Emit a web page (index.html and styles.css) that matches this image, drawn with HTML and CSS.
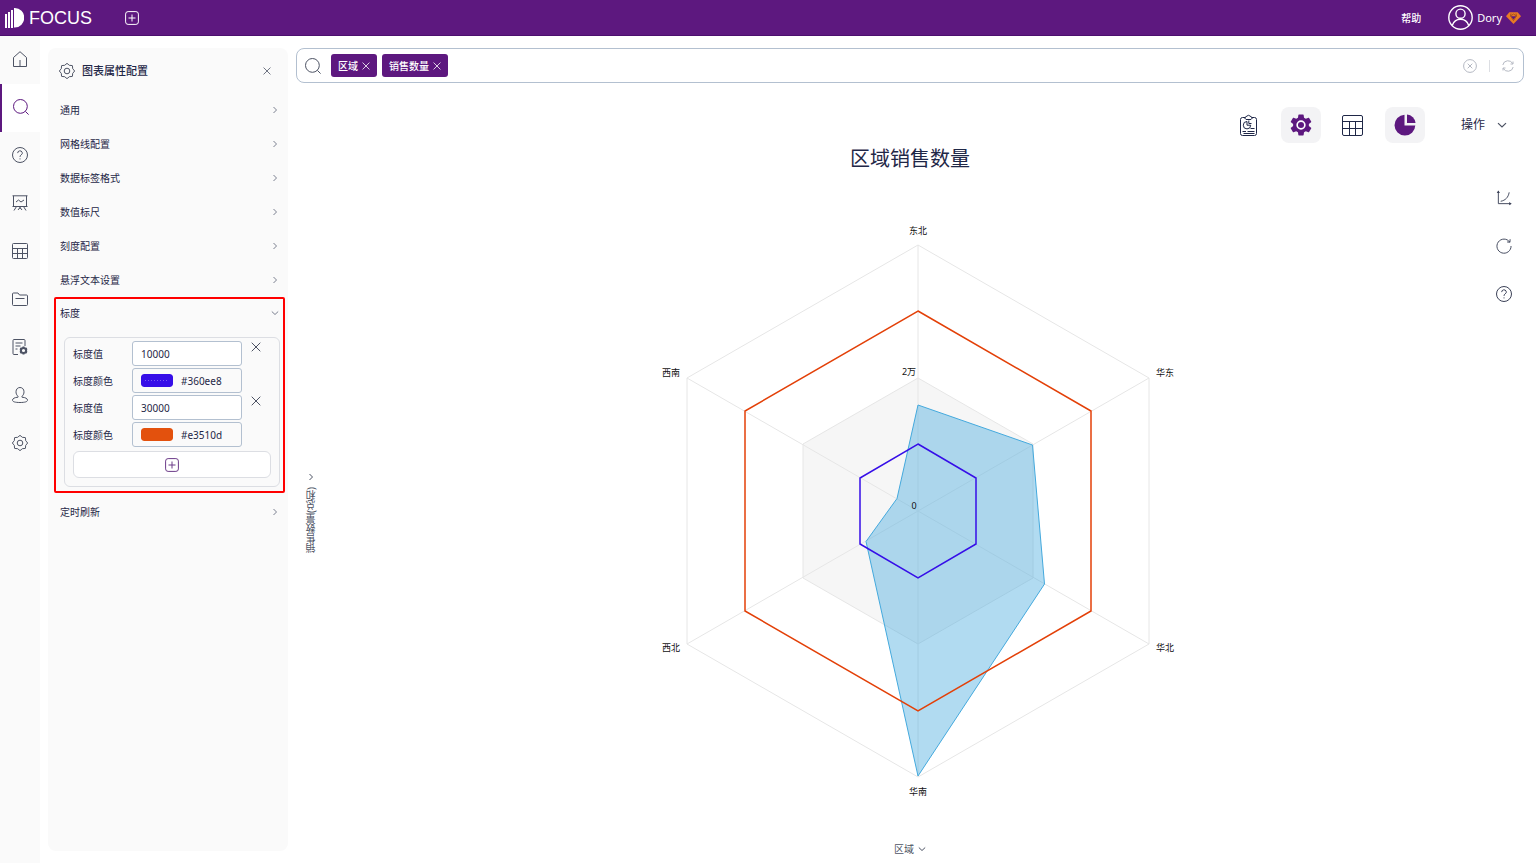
FILE: index.html
```html
<!DOCTYPE html>
<html lang="zh-CN">
<head>
<meta charset="utf-8">
<meta name="viewport" content="width=device-width, initial-scale=1">
<title>FOCUS</title>
<link rel="stylesheet" href="styles.css">
</head>
<body>
<svg class="defs" aria-hidden="true">
  <symbol id="i-gear" viewBox="-8 -8 16 16"><path d="M6.790-1.070Q8.400 0 6.790 1.070Q5.170 2.140 5.560 4.040Q5.940 5.940 4.040 5.560Q2.140 5.170 1.070 6.790Q0 8.400-1.070 6.790Q-2.140 5.170-4.040 5.560Q-5.940 5.940-5.560 4.040Q-5.170 2.140-6.790 1.070Q-8.400 0-6.790-1.070Q-5.170-2.140-5.560-4.040Q-5.940-5.940-4.040-5.560Q-2.140-5.170-1.070-6.790Q0-8.400 1.070-6.790Q2.140-5.170 4.040-5.560Q5.940-5.940 5.560-4.040Q5.170-2.140 6.790-1.070Z"/><circle r="2.800"/></symbol>
  <symbol id="i-search" viewBox="0 0 16 16"><circle cx="7.4" cy="7.4" r="6.9"/><path d="M12.4 12.4l3.2 3.2"/></symbol>
  <symbol id="i-help" viewBox="0 0 16 16"><circle cx="8" cy="8" r="7.5"/><path d="M5.7 6.1a2.3 2.2 0 1 1 3.5 1.8C8.400 8.400 8 8.800 8 9.900M8 11.400v1"/></symbol>
  <symbol id="i-x" viewBox="0 0 10 10"><path d="M.7.7l8.600 8.600M9.300.7L.7 9.300"/></symbol>
  <symbol id="i-right" viewBox="0 0 8 8"><path d="M2.500 1l3 3-3 3"/></symbol>
  <symbol id="i-down" viewBox="0 0 8 8"><path d="M.8 2.500l3.200 3 3.200-3"/></symbol>
  <symbol id="i-plus" viewBox="0 0 14 14"><rect x=".6" y=".6" width="12.800" height="12.800" rx="2.500"/><path d="M7 3.500v7M3.500 7h7"/></symbol>
</svg>

<header class="topbar">
  <a class="brand" href="#">
    <svg class="logo" width="19" height="20" viewBox="0 0 19 20" aria-hidden="true"><path d="M0 6h2v14H0zM3 4h2v16H3zM6 2h2v18H6zM9 0h.8a9.200 9.500 0 0 1 0 19.500H9z"/></svg>
    <span>FOCUS</span>
  </a>
  <button class="icon-btn new-tab" aria-label="新建"><svg width="14" height="14"><use href="#i-plus"/></svg></button>
  <a class="help-link" href="#">帮助</a>
  <button class="user">
    <svg width="25" height="25" viewBox="0 0 25 25"><circle cx="12.500" cy="12.500" r="11.700"/><circle cx="12.500" cy="8.700" r="4.600"/><path d="M4.200 20.500c1.500-4.500 4.500-6.300 8.300-6.300s6.800 1.800 8.300 6.300"/></svg>
    <span>Dory</span>
    <svg class="gem" width="15" height="12" viewBox="0 0 15 12"><path class="gem-body" d="M3.300.3h8.400L15 4.200 7.500 12 0 4.200z"/><path d="M4.600 4.200h5.800L7.500 7.600z" class="gem-core"/><path d="M4.500 4L7.500 8.500 10.500 4M5 1.500L4.500 4 7.500 2l3 2L10 1.500" class="gem-line"/></svg>
  </button>
</header>

<div class="shell">
  <nav class="rail" aria-label="主导航">
    <a href="#" aria-label="首页"><svg width="16" height="16" viewBox="0 0 16 16"><path d="M1.500 6.500L8 .7l6.500 5.800v9h-13zM8 9v6.500"/></svg></a>
    <a href="#" class="active" aria-label="搜索"><svg width="16" height="16"><use href="#i-search"/></svg></a>
    <a href="#" aria-label="问答"><svg width="16" height="16"><use href="#i-help"/></svg></a>
    <a href="#" aria-label="看板"><svg width="16" height="16" viewBox="0 0 16 16"><path d="M.5.800h15M1.500.800v10.700h13V.8M.5 11.500h15M4.500 11.500L2 15.500M11.500 11.500l2.500 4M8 11.500v2.500M6 15l2-2.500 2 2.500M4 7l2.500-2 2.500 2 3-2"/></svg></a>
    <a href="#" aria-label="数据表"><svg width="16" height="16" viewBox="0 0 16 16"><rect x=".5" y=".5" width="15" height="15" rx="1"/><path d="M.5 5.500h15M.5 10.500h15M5.500 5.500v10M10.500 5.500v10"/></svg></a>
    <a href="#" aria-label="项目"><svg width="16" height="16" viewBox="0 0 16 16"><path d="M.5 13.500v-10.500a1 1 0 0 1 1-1h4.500l1.500 2h7a1 1 0 0 1 1 1v8.500a1 1 0 0 1-1 1h-13a1 1 0 0 1-1-1zM3.500 7.500h9"/></svg></a>
    <a href="#" aria-label="任务"><svg width="16" height="16" viewBox="0 0 16 16"><path d="M6 15.500H2a1 1 0 0 1-1-1V1.500a1 1 0 0 1 1-1h10a1 1 0 0 1 1 1V7M3.500 4h7M3.500 7h5M3.500 10h2"/><circle cx="11.500" cy="11.500" r="2.600" class="thick"/><path class="thick" d="M11.500 7.500v1M11.500 14.500v1M8 9.500l1 .5M14 13l1 .5M8 13.500l1-.5M14 10l1-.5"/></svg></a>
    <a href="#" aria-label="用户"><svg width="16" height="16" viewBox="0 0 16 16"><path d="M6 9.200C4.500 8 4 6.500 4 4.800 4 2.200 5.700.5 8 .5s4 1.700 4 4.300c0 1.700-.5 3.200-2 4.400v1c3.500.3 5.500 1.300 5.500 3 0 1.500-2.500 2.300-7.500 2.300S.5 14.700.5 13.200c0-1.700 2-2.700 5.500-3z"/></svg></a>
    <a href="#" aria-label="设置"><svg width="16" height="16"><use href="#i-gear"/></svg></a>
  </nav>

  <aside class="panel">
    <div class="panel-head">
      <svg width="16" height="16"><use href="#i-gear"/></svg>
      <h2>图表属性配置</h2>
      <button class="icon-btn" aria-label="关闭"><svg width="8" height="8"><use href="#i-x"/></svg></button>
    </div>
    <button class="row">通用<svg width="8" height="8"><use href="#i-right"/></svg></button>
    <button class="row">网格线配置<svg width="8" height="8"><use href="#i-right"/></svg></button>
    <button class="row">数据标签格式<svg width="8" height="8"><use href="#i-right"/></svg></button>
    <button class="row">数值标尺<svg width="8" height="8"><use href="#i-right"/></svg></button>
    <button class="row">刻度配置<svg width="8" height="8"><use href="#i-right"/></svg></button>
    <button class="row">悬浮文本设置<svg width="8" height="8"><use href="#i-right"/></svg></button>
    <section class="marked">
      <button class="row" aria-expanded="true">标度<svg width="8" height="8"><use href="#i-down"/></svg></button>
      <div class="scales">
        <div class="field">
          <label for="v1">标度值</label>
          <input id="v1" class="box" type="text" value="10000">
          <button class="icon-btn remove" aria-label="删除"><svg width="10" height="10"><use href="#i-x"/></svg></button>
        </div>
        <div class="field">
          <label for="c1">标度颜色</label>
          <div class="box color"><span class="swatch dotted"><input id="c1" type="color" value="#360ee8"></span><span>#360ee8</span></div>
        </div>
        <div class="field">
          <label for="v2">标度值</label>
          <input id="v2" class="box" type="text" value="30000">
          <button class="icon-btn remove" aria-label="删除"><svg width="10" height="10"><use href="#i-x"/></svg></button>
        </div>
        <div class="field">
          <label for="c2">标度颜色</label>
          <div class="box color"><span class="swatch"><input id="c2" type="color" value="#e3510d"></span><span>#e3510d</span></div>
        </div>
        <button class="add" aria-label="添加标度"><svg width="14" height="14"><use href="#i-plus"/></svg></button>
      </div>
    </section>
    <button class="row">定时刷新<svg width="8" height="8"><use href="#i-right"/></svg></button>
  </aside>

  <main class="main">
    <div class="searchbar">
      <svg width="16" height="16"><use href="#i-search"/></svg>
      <span class="tag">区域<button aria-label="移除区域"><svg width="8" height="8"><use href="#i-x"/></svg></button></span>
      <span class="tag">销售数量<button aria-label="移除销售数量"><svg width="8" height="8"><use href="#i-x"/></svg></button></span>
      <input class="query" type="text" aria-label="搜索">
      <button class="icon-btn" aria-label="清空"><svg width="14" height="14" viewBox="0 0 14 14"><circle cx="7" cy="7" r="6.400"/><path d="M4.700 4.700l4.600 4.600M9.300 4.700L4.700 9.300"/></svg></button>
      <span class="divider"></span>
      <button class="icon-btn" aria-label="刷新"><svg width="12" height="12" viewBox="0 0 12 12"><path d="M.8 5A5.300 5.300 0 0 1 10.800 3.800M11.200 7A5.300 5.300 0 0 1 1.200 8.200M11 1.500v2.500H8.500M1 10.500V8h2.500"/></svg></button>
    </div>

    <div class="toolbar">
      <button class="tool" aria-label="报告"><svg width="18" height="22" viewBox="0 0 18 22"><path d="M5.500 3.500h-3a2 2 0 0 0-2 2v14a2 2 0 0 0 2 2h12a2 2 0 0 0 2-2v-14a2 2 0 0 0-2-2h-3M4.500 3.800L7 2a2.200 2.200 0 0 1 3 0l2.500 1.800-1.500 1.700H6zM7 7.500a3.700 3.700 0 1 0 3.700 3.700H7zM8.800 6.500v3h2.700M10.500 14.500h4M2.500 17.500h3.500M7.500 17.500h7M3.500 19.500h11"/></svg></button>
      <button class="tool on" aria-label="图表配置"><svg class="solid" width="22" height="22" viewBox="2 2 20 20"><path d="M19.140 12.940c.04-.3.060-.61.060-.94s-.02-.64-.07-.94l2.030-1.580c.18-.14.230-.41.120-.61l-1.920-3.320c-.12-.22-.37-.29-.59-.22l-2.390.96c-.5-.38-1.030-.7-1.620-.94l-.36-2.540c-.04-.24-.24-.41-.48-.41h-3.840c-.24 0-.43.170-.47.410l-.36 2.540c-.59.240-1.130.570-1.620.940l-2.390-.96c-.22-.08-.47 0-.59.220L2.740 8.870c-.12.210-.08.470.12.610l2.030 1.580c-.05.3-.09.630-.09.940s.02.640.07.940l-2.030 1.580c-.18.140-.23.410-.12.610l1.920 3.320c.12.220.37.290.59.220l2.390-.96c.5.380 1.030.7 1.620.940l.36 2.540c.05.240.24.410.48.410h3.840c.24 0 .44-.17.470-.41l.36-2.540c.59-.24 1.130-.56 1.620-.94l2.390.96c.22.080.47 0 .59-.22l1.920-3.320c.12-.22.070-.47-.12-.61z"/><circle cx="12" cy="12" r="3.500" class="ring"/></svg></button>
      <button class="tool" aria-label="表格"><svg width="21" height="21" viewBox="0 0 21 21"><rect x=".5" y=".5" width="20" height="20" rx="1.500"/><path d="M.5 6.500h20M.5 13.500h20M7.500 6.500v14M13.500 6.500v14"/></svg></button>
      <button class="tool on" aria-label="图表"><svg class="solid" width="22" height="22" viewBox="0 0 22 22"><path d="M10.500.7v10.800h10.800A10.400 10.400 0 1 1 10.500.7z"/><path d="M13 .4A9.600 9.600 0 0 1 21.600 9H13z"/></svg></button>
      <button class="actions">操作<svg width="10" height="10" viewBox="0 0 8 8"><use href="#i-down"/></svg></button>
    </div>

    <h1 class="title">区域销售数量</h1>

    <div class="stage">
      <button class="y-axis"><svg width="8" height="8"><use href="#i-right"/></svg><span>销售数量(总和)</span></button>
      <svg class="radar" viewBox="0 0 1148 660" role="img" aria-label="区域销售数量雷达图">
        <g transform="translate(574 336)">
          <polygon class="band" points="0,-133 115,-67 115,67 0,133 -115,67 -115,-67"/>
          <polygon class="grid" points="0,-266 231,-133 231,133 0,266 -231,133 -231,-133"/>
          <path class="grid" d="M0-266V266M-231-133L231 133M-231 133L231-133"/>
          <polygon class="data" points="0,-106 114.500,-66 126.500,73 0,265 -52,30.500 -21,-12.500"/>
          <polygon class="mark high" points="0,-200 173,-100 173,100 0,200 -173,100 -173,-100"/>
          <polygon class="mark low" points="0,-67 58,-33 58,33 0,67 -58,33 -58,-33"/>
          <g class="labels">
            <text x="0" y="-277">东北</text>
            <text x="247" y="-135">华东</text>
            <text x="247" y="140">华北</text>
            <text x="0" y="284">华南</text>
            <text x="-247" y="140">西北</text>
            <text x="-247" y="-135">西南</text>
            <text x="-9" y="-136">2万</text>
            <text x="-4" y="-2">0</text>
          </g>
        </g>
      </svg>
      <div class="side-tools">
        <button class="icon-btn" aria-label="坐标轴"><svg width="16" height="16" viewBox="0 0 17 17"><path d="M2.500 1v13.500H16M5 12c5-1 8-4 9-9.500"/><path class="arrow" d="M.8 3.200L2.500.5l1.700 2.700zM14 12.800l2.700 1.700-2.700 1.700z"/></svg></button>
        <button class="icon-btn" aria-label="重新加载"><svg width="16" height="16" viewBox="0 0 17 17"><path d="M14.600 4.300A7.500 7.500 0 1 0 16 8.500M15 1.300l-.2 3.200-3-.3"/></svg></button>
        <button class="icon-btn" aria-label="帮助"><svg width="16" height="16"><use href="#i-help"/></svg></button>
      </div>
    </div>
    <button class="x-axis">区域<svg width="8" height="8"><use href="#i-down"/></svg></button>
  </main>
</div>
</body>
</html>
```
FILE: styles.css
```css
* { box-sizing: border-box; }

body {
  margin: 0;
  min-height: 100vh;
  display: flex;
  flex-direction: column;
  background: #fff;
  color: #1f2747;
  font: 10px/16px "Noto Sans", "Noto Sans CJK SC", sans-serif;
}

h1, h2 { margin: 0; font-weight: 400; }
a { color: inherit; text-decoration: none; }

button, input { font: inherit; color: inherit; }

button {
  padding: 0;
  border: 0;
  background: none;
  cursor: pointer;
}

svg {
  flex: none;
  display: block;
  fill: none;
  stroke: currentColor;
}

.defs { position: absolute; width: 0; height: 0; }
.icon-btn { display: flex; align-items: center; justify-content: center; }

/* Top bar */
.topbar {
  height: 36px;
  display: flex;
  align-items: center;
  padding: 0 15px 0 5px;
  background: #5d187f;
  border-bottom: 1px solid #4c0f6e;
  color: #fff;
}

.brand {
  display: flex;
  align-items: center;
  gap: 5px;
  font: 18px/20px "Liberation Sans", sans-serif;
}
.logo { fill: #fff; stroke: none; }
.new-tab { margin-left: 33px; }
.help-link { margin-left: auto; font-weight: 500; }

.user {
  display: flex;
  align-items: center;
  gap: 4px;
  margin-left: 27px;
  font-size: 11px;
}
.user svg { stroke-width: 1.4; }
.user .gem { stroke: none; }
.user .gem-body { fill: #e87b25; }
.user .gem-core { fill: #5d187f; }
.user .gem-line { stroke: #a8501f; stroke-width: 1; }

/* Layout */
.shell { flex: 1; display: flex; }

.rail {
  flex: none;
  width: 40px;
  display: flex;
  flex-direction: column;
  background: #fafafa;
}
.rail a {
  height: 48px;
  display: flex;
  align-items: center;
  justify-content: center;
  padding-bottom: 2px;
  color: #4d5364;
}
.rail .active {
  background: #fff;
  border-left: 2px solid #5d187f;
  color: #5d187f;
}
.thick { stroke-width: 2; }

/* Settings panel */
.panel {
  flex: none;
  width: 240px;
  margin: 12px 8px;
  border-radius: 8px;
  background: #fafafa;
}

.panel-head {
  height: 45px;
  display: flex;
  align-items: center;
  gap: 7px;
  padding: 0 17px 0 11px;
  color: #4d5364;
}
.panel-head h2 {
  flex: 1;
  color: #1f2747;
  font-size: 11px;
  font-weight: 500;
}

.row {
  width: 100%;
  height: 34px;
  display: flex;
  align-items: center;
  justify-content: space-between;
  padding: 0 9px 0 12px;
}
.row svg { color: #7b8090; }

.marked {
  margin: 0 3px 2px 6px;
  padding-bottom: 4px;
  border: 2px solid #ff0000;
  border-radius: 2px;
}
.marked .row { height: 28px; padding: 0 4px; }

.scales {
  display: flex;
  flex-direction: column;
  gap: 2px;
  margin: 10px 3px 0 8px;
  padding: 3px 8px 8px;
  border: 1px solid #dcdee3;
  border-radius: 6px;
}

.field {
  display: grid;
  grid-template-columns: 59px 110px 28px;
  align-items: center;
}
.box {
  width: 100%;
  height: 25px;
  padding: 0 8px;
  border: 1px solid #b3c0d0;
  border-radius: 3px;
  background: #fff;
  outline: none;
}
.color { display: flex; align-items: center; gap: 8px; background: #fafafa; }

.swatch { position: relative; display: flex; }
.swatch input {
  width: 32px;
  height: 13px;
  padding: 0;
  border: 0;
  border-radius: 3px;
  overflow: hidden;
  appearance: none;
  background: none;
}
.swatch input::-webkit-color-swatch-wrapper { padding: 0; }
.swatch input::-webkit-color-swatch { border: 0; border-radius: 3px; }
.dotted::after {
  content: "";
  position: absolute;
  inset: 6px 4px auto;
  height: 1px;
  background: repeating-linear-gradient(90deg, #7a5cf2 0 1px, transparent 1px 3px);
}

.remove { align-self: start; height: 12px; color: #4d5364; }

.add {
  height: 27px;
  display: flex;
  align-items: center;
  justify-content: center;
  margin-top: 2px;
  border: 1px solid #dcdee3;
  border-radius: 6px;
  background: #fff;
  color: #6b3a88;
}

/* Main area */
.main {
  flex: 1;
  min-width: 0;
  display: flex;
  flex-direction: column;
  padding: 12px 12px 0 0;
}

.searchbar {
  height: 35px;
  display: flex;
  align-items: center;
  gap: 5px;
  padding: 0 9px 0 8px;
  border: 1px solid #b3c0d0;
  border-radius: 8px;
  color: #b4b8c2;
}
.searchbar > svg { margin-right: 5px; color: #4d5364; }
.tag {
  height: 23px;
  display: flex;
  align-items: center;
  gap: 4px;
  padding: 0 7px;
  border-radius: 3px;
  background: #5d187f;
  color: #fff;
  font-weight: 500;
}
.query { flex: 1; min-width: 0; border: 0; outline: none; background: none; }
.divider { width: 1px; height: 12px; margin: 0 7px; background: #dcdee3; }

.toolbar {
  display: flex;
  justify-content: flex-end;
  gap: 12px;
  margin-top: 24px;
  padding-right: 17px;
}
.tool {
  width: 40px;
  height: 36px;
  display: flex;
  align-items: center;
  justify-content: center;
  border-radius: 8px;
}
.on { background: #f3f3f5; color: #5d187f; }
.solid { fill: #5d187f; stroke: none; }
.ring { stroke: #fff; stroke-width: 1.5; }
.actions {
  display: flex;
  align-items: center;
  gap: 12px;
  margin-left: 24px;
  font-size: 12px;
}
.actions svg { color: #4d5364; }

.title { font-size: 20px; line-height: 32px; text-align: center; }

.stage {
  flex: 1;
  display: grid;
  grid-template-columns: 48px minmax(0, 1fr) 32px;
}
.y-axis {
  display: flex;
  flex-direction: column;
  align-items: center;
  justify-content: center;
  gap: 6px;
  width: 30px;
  padding-top: 16px;
  color: #4d5364;
}
.y-axis span { writing-mode: vertical-rl; transform: rotate(180deg); }
.radar { width: 100%; height: 100%; }

.band { fill: #f6f6f6; stroke: #e6e6e6; }
.grid { stroke: #e6e6e6; }
.data { fill: #44a9dd; fill-opacity: .42; stroke: #44a9dd; }
.mark { stroke-width: 1.5; }
.high { stroke: #e34008; }
.low { stroke: #360ee8; }
.labels { fill: #111; stroke: none; font-size: 9px; text-anchor: middle; }

.side-tools {
  display: flex;
  flex-direction: column;
  gap: 24px;
  width: 24px;
  padding-top: 11px;
}
.side-tools .icon-btn { height: 24px; color: #3c4258; }
.arrow { fill: currentColor; stroke: none; }

.x-axis {
  align-self: center;
  height: 28px;
  display: flex;
  align-items: center;
  gap: 4px;
  color: #4d5364;
}
```
